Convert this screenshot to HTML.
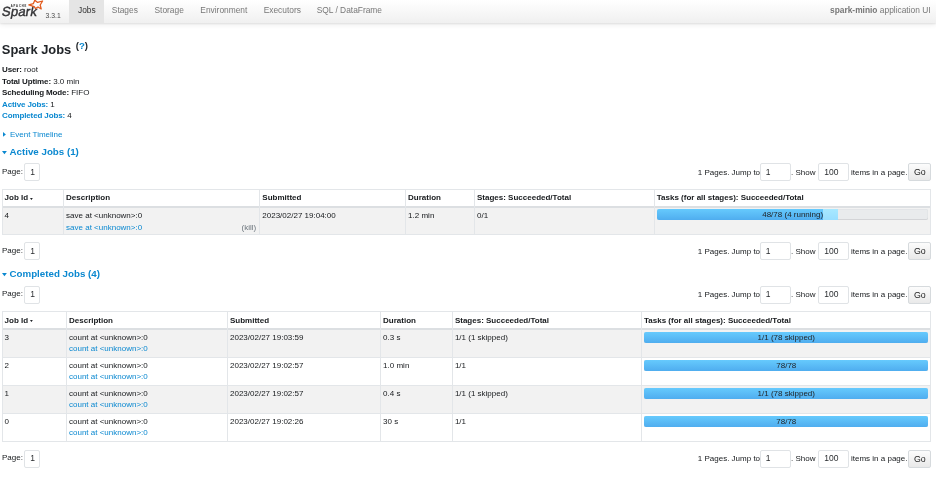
<!DOCTYPE html>
<html><head><meta charset="utf-8">
<style>
*{box-sizing:border-box;margin:0;padding:0}
html,body{width:936px;height:488px;overflow:hidden;background:#fff}
body{font-family:"Liberation Sans",sans-serif;color:#16191c;font-size:8.0px;position:relative;will-change:transform}
.a{position:absolute;white-space:nowrap}
.nav{position:absolute;left:0;top:0;width:936px;height:23px;background:linear-gradient(#ffffff,#f0f0f0);box-shadow:0 1px 1.5px rgba(0,0,0,.08),0 2px 5px rgba(0,0,0,.07)}
.tab{position:absolute;top:0;height:23px;font-size:8.4px;color:#777;line-height:21.4px}
.tab.on{background:#e5e5e5;color:#333}
.blue{color:#0a88d0}
.lbl b{letter-spacing:-0.12px}
b{font-weight:bold}
.title{font-size:12.9px;font-weight:bold;color:#212529}
.sec{font-size:9.75px;font-weight:bold;color:#0a88d0}
.pg{position:absolute;border:1px solid #e0e3e6;border-radius:2px;background:#fff;color:#2a2d30}
.btn{position:absolute;border:1px solid #d6dadd;border-radius:2px;background:linear-gradient(#fcfcfc,#e9e9e9);color:#222;text-align:center}
.hl{position:absolute;background:#e3e6e9;height:1px}
.vl{position:absolute;background:#e3e6e9;width:1px}
.bar{position:absolute;height:11px;border-radius:2px;background:#e9ebed;overflow:hidden;box-shadow:inset 0 -1px 0 rgba(0,0,0,.07),inset 0 0 0 0.5px #dde0e3}
.bar .s{position:absolute;left:0;top:0;bottom:0;background:linear-gradient(#66cafd,#4fadef)}
.bar .r{position:absolute;top:0;bottom:0;background:linear-gradient(#a8e8ff,#98deff)}
.bar .t{position:absolute;left:0;right:0;top:0;text-align:center;line-height:11px;color:#212529}
</style></head><body>
<div class="nav">
<div class="a" style="left:1.6px;top:3.9px;font-size:13.2px;font-weight:normal;-webkit-text-stroke:0.4px #333336;color:#333336;letter-spacing:0.15px;transform:skewX(-10deg)">Spark</div>
<div class="a" style="left:10.8px;top:5.4px;font-size:2.6px;font-weight:bold;color:#333;letter-spacing:0.95px;-webkit-text-stroke:0.05px #333">APACHE</div>
<svg class="a" style="left:0;top:0" width="50" height="23" viewBox="0 0 50 23"><polygon points="28.8,4.9 33.4,3.6 34.8,0.2 37.6,2.4 42.6,1.0 40.2,5.0 41.2,9.0 38.0,7.0 35.6,8.6 34.2,6.6" fill="none" stroke="#e25a1c" stroke-width="1.25" stroke-linejoin="round"/></svg>
<div class="a" style="left:45.6px;top:11.6px;font-size:6.8px;color:#4a4a4a">3.3.1</div>
<div class="tab on" style="left:69px;width:34.5px;padding-left:9px">Jobs</div>
<div class="tab" style="left:111.8px">Stages</div>
<div class="tab" style="left:154.5px">Storage</div>
<div class="tab" style="left:200.3px">Environment</div>
<div class="tab" style="left:263.7px">Executors</div>
<div class="tab" style="left:316.7px">SQL / DataFrame</div>
<div class="tab" style="left:830px"><b>spark-minio</b> application UI</div>
</div>
<div class="a title" style="left:1.8px;top:41.7px">Spark Jobs <span style="font-size:9.6px;position:relative;top:-5.1px;font-weight:bold;left:0.8px">(<span class="blue">?</span>)</span></div>
<div class="a lbl" style="left:2px;top:64px;line-height:11.5px"><b>User:</b> root<br><b>Total Uptime:</b> 3.0 min<br><b>Scheduling Mode:</b> FIFO<br><b class="blue">Active Jobs:</b> 1<br><b class="blue">Completed Jobs:</b> 4</div>
<svg class="a" style="left:3.2px;top:132.2px" width="4" height="5"><polygon points="0,0 2.9,2.4 0,4.8" fill="#0a88d0"/></svg>
<div class="a blue" style="left:10px;top:130px">Event Timeline</div>
<svg class="a" style="left:1.8px;top:151.3px" width="5" height="4"><polygon points="0,0 4.9,0 2.45,3.2" fill="#0a88d0"/></svg>
<div class="a sec" style="left:9.5px;top:146.3px">Active Jobs (1)</div>
<div class="a" style="left:2px;top:166.79999999999998px">Page:</div>
<div class="pg" style="left:24px;top:163.2px;width:15.5px;height:18px;padding:2.9px 0 0 5.2px;font-size:8.5px">1</div>
<div class="a" style="left:697.8px;top:167.7px">1 Pages. Jump to</div>
<div class="pg" style="left:759.6px;top:163.2px;width:31px;height:18px;padding:2.9px 0 0 5.2px;font-size:8.5px">1</div>
<div class="a" style="left:791px;top:167.7px">. Show</div>
<div class="pg" style="left:818px;top:163.2px;width:30.5px;height:18px;padding:2.9px 0 0 5.2px;font-size:8.5px">100</div>
<div class="a" style="left:851px;top:167.7px">items in a page.</div>
<div class="btn" style="left:908.4px;top:163.2px;width:22.8px;height:18px;line-height:16.6px;font-size:8.8px">Go</div>
<div class="a" style="left:2px;top:208.0px;width:928px;height:26.5px;background:#f2f2f2"></div>
<div class="hl" style="left:1.5px;top:189.0px;width:929px"></div>
<div class="hl" style="left:1.5px;top:206.2px;width:929px;height:2px;background:#dcdfe2"></div>
<div class="hl" style="left:1.5px;top:234.0px;width:929px"></div>
<div class="vl" style="left:1.5px;top:189.0px;height:46.0px"></div>
<div class="vl" style="left:63.0px;top:189.0px;height:46.0px"></div>
<div class="vl" style="left:259.2px;top:189.0px;height:46.0px"></div>
<div class="vl" style="left:405.0px;top:189.0px;height:46.0px"></div>
<div class="vl" style="left:473.9px;top:189.0px;height:46.0px"></div>
<div class="vl" style="left:653.7px;top:189.0px;height:46.0px"></div>
<div class="vl" style="left:929.5px;top:189.0px;height:46.0px"></div>
<div class="a" style="left:4.6px;top:193.0px;font-weight:bold">Job Id<svg style="position:absolute;left:25.5px;top:4.5px" width="3" height="2.2"><polygon points="0,0 2.8,0 1.4,2.1" fill="#212529"/></svg></div>
<div class="a" style="left:66.1px;top:193.0px;font-weight:bold">Description</div>
<div class="a" style="left:262.3px;top:193.0px;font-weight:bold">Submitted</div>
<div class="a" style="left:408.1px;top:193.0px;font-weight:bold">Duration</div>
<div class="a" style="left:477.0px;top:193.0px;font-weight:bold">Stages: Succeeded/Total</div>
<div class="a" style="left:656.8000000000001px;top:193.0px;font-weight:bold">Tasks (for all stages): Succeeded/Total</div>
<div class="a" style="left:4.6px;top:210.2px;line-height:11.4px">4</div>
<div class="a" style="left:66.1px;top:210.2px;line-height:11.4px">save at &lt;unknown&gt;:0<br><span class="blue">save at &lt;unknown&gt;:0</span></div>
<div class="a" style="left:262.3px;top:210.2px;line-height:11.4px">2023/02/27 19:04:00</div>
<div class="a" style="left:408.1px;top:210.2px;line-height:11.4px">1.2 min</div>
<div class="a" style="left:477.0px;top:210.2px;line-height:11.4px">0/1</div>
<div class="a" style="left:256.2px;top:222.7px;transform:translateX(-100%);color:#6c757d">(kill)</div>
<div class="bar" style="left:657.2px;top:208.9px;width:271.0px"><div class="s" style="width:166.123px"></div><div class="r" style="left:166.123px;width:14.363px"></div><div class="t">48/78 (4 running)</div></div>
<div class="a" style="left:2px;top:246.0px">Page:</div>
<div class="pg" style="left:24px;top:242.4px;width:15.5px;height:18px;padding:2.9px 0 0 5.2px;font-size:8.5px">1</div>
<div class="a" style="left:697.8px;top:246.9px">1 Pages. Jump to</div>
<div class="pg" style="left:759.6px;top:242.4px;width:31px;height:18px;padding:2.9px 0 0 5.2px;font-size:8.5px">1</div>
<div class="a" style="left:791px;top:246.9px">. Show</div>
<div class="pg" style="left:818px;top:242.4px;width:30.5px;height:18px;padding:2.9px 0 0 5.2px;font-size:8.5px">100</div>
<div class="a" style="left:851px;top:246.9px">items in a page.</div>
<div class="btn" style="left:908.4px;top:242.4px;width:22.8px;height:18px;line-height:16.6px;font-size:8.8px">Go</div>
<svg class="a" style="left:1.8px;top:273.3px" width="5" height="4"><polygon points="0,0 4.9,0 2.45,3.2" fill="#0a88d0"/></svg>
<div class="a sec" style="left:9.5px;top:268.3px">Completed Jobs (4)</div>
<div class="a" style="left:2px;top:289.1px">Page:</div>
<div class="pg" style="left:24px;top:285.5px;width:15.5px;height:18px;padding:2.9px 0 0 5.2px;font-size:8.5px">1</div>
<div class="a" style="left:697.8px;top:290.0px">1 Pages. Jump to</div>
<div class="pg" style="left:759.6px;top:285.5px;width:31px;height:18px;padding:2.9px 0 0 5.2px;font-size:8.5px">1</div>
<div class="a" style="left:791px;top:290.0px">. Show</div>
<div class="pg" style="left:818px;top:285.5px;width:30.5px;height:18px;padding:2.9px 0 0 5.2px;font-size:8.5px">100</div>
<div class="a" style="left:851px;top:290.0px">items in a page.</div>
<div class="btn" style="left:908.4px;top:285.5px;width:22.8px;height:18px;line-height:16.6px;font-size:8.8px">Go</div>
<div class="a" style="left:2px;top:329.5px;width:928px;height:28px;background:#f2f2f2"></div>
<div class="a" style="left:2px;top:385.5px;width:928px;height:28px;background:#f2f2f2"></div>
<div class="hl" style="left:1.5px;top:311.0px;width:929px"></div>
<div class="hl" style="left:1.5px;top:327.7px;width:929px;height:2px;background:#dcdfe2"></div>
<div class="hl" style="left:1.5px;top:357.0px;width:929px"></div>
<div class="hl" style="left:1.5px;top:385.0px;width:929px"></div>
<div class="hl" style="left:1.5px;top:413.0px;width:929px"></div>
<div class="hl" style="left:1.5px;top:441.0px;width:929px"></div>
<div class="vl" style="left:1.5px;top:311.0px;height:131.0px"></div>
<div class="vl" style="left:65.9px;top:311.0px;height:131.0px"></div>
<div class="vl" style="left:226.9px;top:311.0px;height:131.0px"></div>
<div class="vl" style="left:380.0px;top:311.0px;height:131.0px"></div>
<div class="vl" style="left:451.8px;top:311.0px;height:131.0px"></div>
<div class="vl" style="left:640.9px;top:311.0px;height:131.0px"></div>
<div class="vl" style="left:929.5px;top:311.0px;height:131.0px"></div>
<div class="a" style="left:4.6px;top:315.7px;font-weight:bold">Job Id<svg style="position:absolute;left:25.5px;top:4.5px" width="3" height="2.2"><polygon points="0,0 2.8,0 1.4,2.1" fill="#212529"/></svg></div>
<div class="a" style="left:69.0px;top:315.7px;font-weight:bold">Description</div>
<div class="a" style="left:230.0px;top:315.7px;font-weight:bold">Submitted</div>
<div class="a" style="left:383.1px;top:315.7px;font-weight:bold">Duration</div>
<div class="a" style="left:454.90000000000003px;top:315.7px;font-weight:bold">Stages: Succeeded/Total</div>
<div class="a" style="left:644.0px;top:315.7px;font-weight:bold">Tasks (for all stages): Succeeded/Total</div>
<div class="a" style="left:4.6px;top:331.9px;line-height:11.4px">3</div>
<div class="a" style="left:69.0px;top:331.9px;line-height:11.4px">count at &lt;unknown&gt;:0<br><span class="blue">count at &lt;unknown&gt;:0</span></div>
<div class="a" style="left:230.0px;top:331.9px;line-height:11.4px">2023/02/27 19:03:59</div>
<div class="a" style="left:383.1px;top:331.9px;line-height:11.4px">0.3 s</div>
<div class="a" style="left:454.90000000000003px;top:331.9px;line-height:11.4px">1/1 (1 skipped)</div>
<div class="bar" style="left:644.4px;top:331.9px;width:283.80000000000007px"><div class="s" style="width:283.80000000000007px"></div><div class="t">1/1 (78 skipped)</div></div>
<div class="a" style="left:4.6px;top:359.9px;line-height:11.4px">2</div>
<div class="a" style="left:69.0px;top:359.9px;line-height:11.4px">count at &lt;unknown&gt;:0<br><span class="blue">count at &lt;unknown&gt;:0</span></div>
<div class="a" style="left:230.0px;top:359.9px;line-height:11.4px">2023/02/27 19:02:57</div>
<div class="a" style="left:383.1px;top:359.9px;line-height:11.4px">1.0 min</div>
<div class="a" style="left:454.90000000000003px;top:359.9px;line-height:11.4px">1/1</div>
<div class="bar" style="left:644.4px;top:359.9px;width:283.80000000000007px"><div class="s" style="width:283.80000000000007px"></div><div class="t">78/78</div></div>
<div class="a" style="left:4.6px;top:387.9px;line-height:11.4px">1</div>
<div class="a" style="left:69.0px;top:387.9px;line-height:11.4px">count at &lt;unknown&gt;:0<br><span class="blue">count at &lt;unknown&gt;:0</span></div>
<div class="a" style="left:230.0px;top:387.9px;line-height:11.4px">2023/02/27 19:02:57</div>
<div class="a" style="left:383.1px;top:387.9px;line-height:11.4px">0.4 s</div>
<div class="a" style="left:454.90000000000003px;top:387.9px;line-height:11.4px">1/1 (1 skipped)</div>
<div class="bar" style="left:644.4px;top:387.9px;width:283.80000000000007px"><div class="s" style="width:283.80000000000007px"></div><div class="t">1/1 (78 skipped)</div></div>
<div class="a" style="left:4.6px;top:415.9px;line-height:11.4px">0</div>
<div class="a" style="left:69.0px;top:415.9px;line-height:11.4px">count at &lt;unknown&gt;:0<br><span class="blue">count at &lt;unknown&gt;:0</span></div>
<div class="a" style="left:230.0px;top:415.9px;line-height:11.4px">2023/02/27 19:02:26</div>
<div class="a" style="left:383.1px;top:415.9px;line-height:11.4px">30 s</div>
<div class="a" style="left:454.90000000000003px;top:415.9px;line-height:11.4px">1/1</div>
<div class="bar" style="left:644.4px;top:415.9px;width:283.80000000000007px"><div class="s" style="width:283.80000000000007px"></div><div class="t">78/78</div></div>
<div class="a" style="left:2px;top:453.1px">Page:</div>
<div class="pg" style="left:24px;top:449.5px;width:15.5px;height:18px;padding:2.9px 0 0 5.2px;font-size:8.5px">1</div>
<div class="a" style="left:697.8px;top:454.0px">1 Pages. Jump to</div>
<div class="pg" style="left:759.6px;top:449.5px;width:31px;height:18px;padding:2.9px 0 0 5.2px;font-size:8.5px">1</div>
<div class="a" style="left:791px;top:454.0px">. Show</div>
<div class="pg" style="left:818px;top:449.5px;width:30.5px;height:18px;padding:2.9px 0 0 5.2px;font-size:8.5px">100</div>
<div class="a" style="left:851px;top:454.0px">items in a page.</div>
<div class="btn" style="left:908.4px;top:449.5px;width:22.8px;height:18px;line-height:16.6px;font-size:8.8px">Go</div>
</body></html>
